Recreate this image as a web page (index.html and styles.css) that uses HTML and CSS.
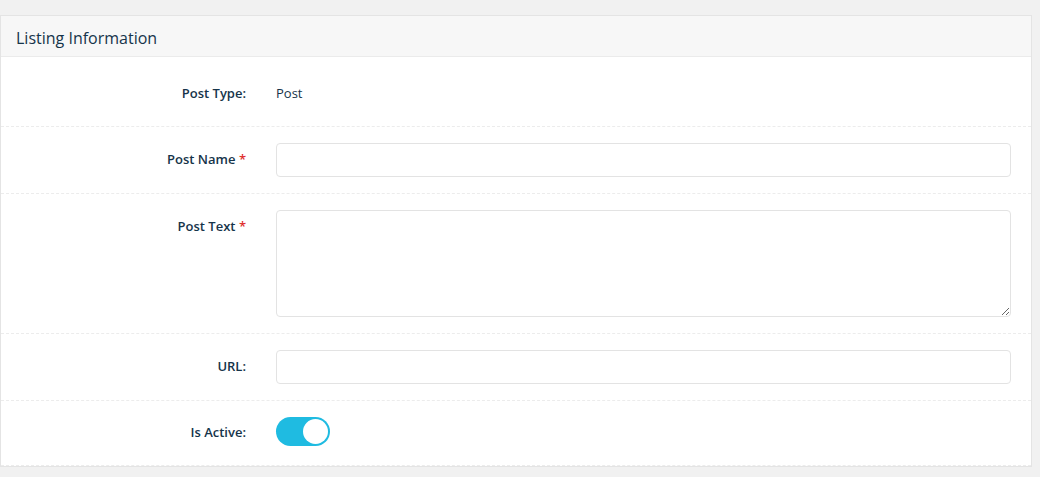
FILE: index.html
```html
<!DOCTYPE html>
<html>
<head>
<meta charset="utf-8">
<link rel="stylesheet" href="styles.css">
</head>
<body>
<div class="panel">
  <div class="panel-head">Listing Information</div>
  <div class="panel-body">
    <div class="row row-static">
      <label class="lbl">Post Type:</label>
      <div class="val">Post</div>
    </div>
    <div class="row">
      <label class="lbl">Post Name <span class="req">*</span></label>
      <input class="ctrl" type="text">
    </div>
    <div class="row">
      <label class="lbl">Post Text <span class="req">*</span></label>
      <textarea class="ctrl area"></textarea>
    </div>
    <div class="row">
      <label class="lbl">URL:</label>
      <input class="ctrl" type="text">
    </div>
    <div class="row row-last">
      <label class="lbl lbl-toggle">Is Active:</label>
      <div class="toggle"><span class="knob"></span></div>
    </div>
  </div>
</div>
</body>
</html>
```
FILE: styles.css
```css
html, body {
  margin: 0;
  padding: 0;
  background: #f1f1f1;
  font-family: "Open Sans", "Liberation Sans", sans-serif;
}
.panel {
  margin-top: 15px;
  width: 1030px;
  border: 1px solid #e4e4e4;
  background: #fff;
}
.panel-head {
  box-sizing: content-box;
  height: 36px;
  padding: 4px 0 0 15px;
  line-height: 36px;
  background: #f7f7f7;
  border-bottom: 1px solid #ebebeb;
  font-size: 16px;
  color: #16344a;
}
.row {
  display: grid;
  grid-template-columns: 245px 1fr;
  column-gap: 30px;
  padding: 16px 20px 16px 0;
  border-bottom: 1px dashed #ececec;
  align-items: start;
}
.lbl {
  text-align: right;
  font-size: 13px;
  font-weight: 600;
  color: #16344a;
  line-height: 20px;
  padding-top: 6px;
}
.req {
  color: #e0302f;
}
.row-static {
  padding-top: 26px;
  padding-bottom: 23px;
}
.row-static .lbl {
  padding-top: 0;
}
.val {
  font-size: 13px;
  color: #16344a;
  line-height: 20px;
}
.ctrl {
  display: block;
  box-sizing: border-box;
  width: 100%;
  height: 34px;
  margin: 0;
  border: 1px solid #e3e3e3;
  border-radius: 4px;
  background: #fff;
  font-family: inherit;
  font-size: 13px;
  padding: 6px 12px;
}
.area {
  height: 107px;
  resize: vertical;
}
.row-last {
  padding-bottom: 19px;
}
.lbl-toggle {
  padding-top: 5px;
}
.toggle {
  position: relative;
  width: 54px;
  height: 29px;
  border-radius: 15px;
  background: #1fbbe1;
}
.knob {
  position: absolute;
  top: 2px;
  right: 2px;
  width: 25px;
  height: 25px;
  border-radius: 50%;
  background: #fff;
}
```
